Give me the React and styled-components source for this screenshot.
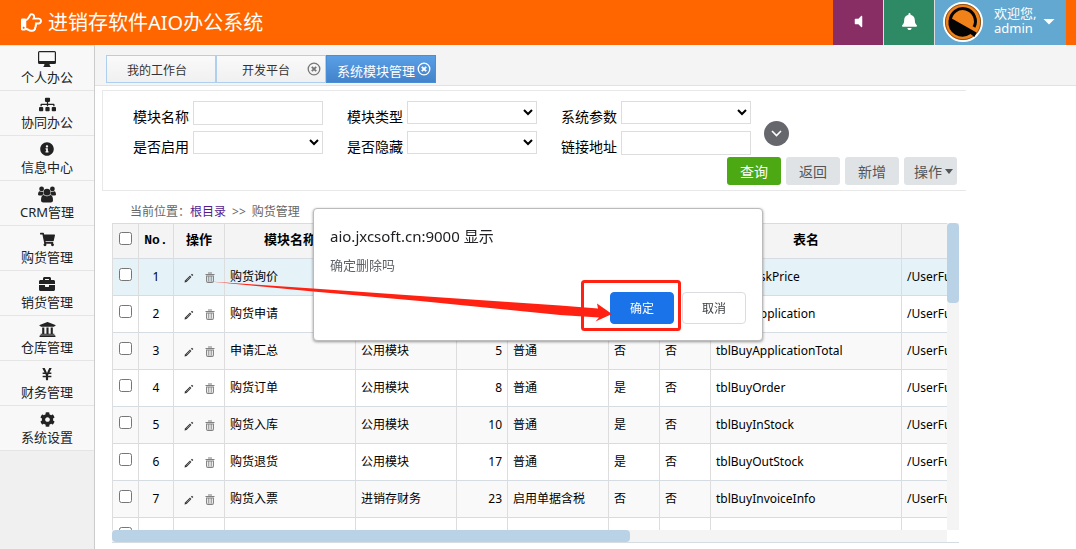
import React, { useState } from "react";
import styled, { createGlobalStyle } from "styled-components";
import {
  FaRegHandPointRight,
  FaSitemap,
  FaInfoCircle,
  FaShoppingCart,
  FaBriefcase,
  FaUniversity,
  FaYenSign,
  FaCog,
  FaVolumeOff,
  FaBell,
} from "react-icons/fa";

const GlobalStyle = createGlobalStyle`
  * {
    box-sizing: border-box;
  }

  body {
    margin: 0;
    background: #fff;
    color: #000;
    font-family: "Noto Sans", "Noto Sans CJK SC", sans-serif;
    font-size: 12px;
  }

  button, input, select {
    font-family: inherit;
  }
`;

const Page = styled.div`
  height: 100vh;
  display: flex;
  flex-direction: column;
  overflow: hidden;
`;

const Header = styled.header`
  flex: none;
  height: 45px;
  display: flex;
  justify-content: space-between;
  padding: 0 10px 0 21px;
  background: #ff6600;
  color: #fff;
`;

const Brand = styled.a`
  display: flex;
  align-items: center;
  gap: 6px;
  color: #fff;
  font-size: 20px;
  line-height: 44px;
  text-decoration: none;
`;

const HeaderTools = styled.div`
  display: flex;
`;

const ToolButton = styled.button`
  width: 51px;
  display: flex;
  align-items: center;
  justify-content: center;
  padding: 0 0 2px;
  border: 0;
  border-right: 1px solid #ddd;
  background: ${(props) => props.$color};
  color: #fff;
  font-size: 17px;
`;

const UserButton = styled.button`
  width: 131px;
  display: flex;
  align-items: center;
  padding: 0 11px 2px 8px;
  border: 0;
  background: #62a8d1;
  color: #fff;
  font-size: 13px;
  line-height: 15px;
  text-align: left;
`;

const UserName = styled.span`
  flex: 1;
  padding: 0 0 1px 11px;
`;

const Body = styled.div`
  flex: 1;
  min-height: 0;
  display: flex;
`;

const Sidebar = styled.nav`
  flex: none;
  width: 95px;
  border-top: 1px solid #e5e5e5;
  border-right: 1px solid #ccc;
  background: #f0f0f0;
`;

const SideItem = styled.a`
  height: 45px;
  display: flex;
  flex-direction: column;
  align-items: center;
  padding-top: 4px;
  border-bottom: 1px solid #e5e5e5;
  background: #f8f8f8;
  color: #222;
  font-size: 13px;
  line-height: 18px;
  text-decoration: none;
`;

const SideIcon = styled.span`
  height: 18px;
  display: flex;
  align-items: center;
`;

const Main = styled.main`
  flex: 1;
  min-width: 0;
  display: flex;
  flex-direction: column;
`;

const TabBar = styled.div`
  flex: none;
  height: 41px;
  display: flex;
  padding: 10px 11px 2px;
  border-bottom: 1px solid #e2e2e2;
  background: #f4f4f4;
`;

const Tab = styled.div`
  width: 110px;
  display: flex;
  align-items: center;
  padding: 0 ${(props) => (props.$closable ? "4px" : "16px")} 0 8px;
  border: 1px solid ${(props) => (props.$active ? "#4a8fd6" : "#aed0ee")};
  background: ${(props) =>
    props.$active
      ? "linear-gradient(#5a9fe6, #4283cb)"
      : "linear-gradient(#fafafa, #f0f0f0)"};
  color: ${(props) => (props.$active ? "#fff" : "#333")};
`;

const TabLabel = styled.button`
  flex: 1;
  padding: 4px 0 0;
  border: 0;
  background: none;
  color: inherit;
  font-size: ${(props) => (props.$active ? "13px" : "12px")};
  line-height: 18px;
  white-space: nowrap;
`;

const CloseButton = styled.button`
  height: 14px;
  padding: 0;
  border: 0;
  background: none;
  color: ${(props) => (props.$active ? "#fff" : "#777")};

  svg {
    display: block;
  }
`;

const Content = styled.div`
  flex: 1;
  min-height: 0;
  display: flex;
  flex-direction: column;
  padding: 4px 110px 6px 7px;
`;

const SearchPanel = styled.form`
  display: flex;
  flex-direction: column;
  padding: 10px 9px 5px 30px;
  border: 1px solid #e8e8e8;
  border-right: 0;
`;

const SearchTop = styled.div`
  display: flex;
  gap: 13px;
`;

const Fields = styled.div`
  display: grid;
  grid-template-columns: repeat(3, 190px);
  grid-auto-rows: 24px;
  gap: 6px 24px;
`;

const Field = styled.label`
  display: flex;
  justify-content: space-between;
  font-size: 14px;
  line-height: 18px;
`;

const FieldName = styled.span`
  padding-top: 7px;
`;

const TextInput = styled.input`
  width: 130px;
  height: 24px;
  border: 1px solid #ddd;
  background: #fff;
`;

const Select = styled.select`
  width: 130px;
  height: 23px;
  border: 1px solid #ddd;
  background: #fff;
`;

const MoreButton = styled.button`
  width: 25px;
  height: 25px;
  display: flex;
  align-items: center;
  justify-content: center;
  margin-top: 20px;
  padding: 0;
  border: 0;
  border-radius: 50%;
  background: #66676c;
  color: #fff;
`;

const Actions = styled.div`
  display: flex;
  justify-content: flex-end;
  gap: 5px;
  padding-top: 2px;
`;

const ActionButton = styled.button`
  height: 28px;
  display: flex;
  align-items: center;
  justify-content: center;
  gap: 3px;
  padding: 0 ${(props) => (props.$menu ? "4px 0 10px" : "13px")};
  border: 0;
  border-radius: 3px;
  background: ${(props) => (props.$primary ? "#4ca914" : "#e0e3e6")};
  color: ${(props) => (props.$primary ? "#fff" : "#555")};
  font-size: 14px;
  white-space: nowrap;
`;

const Breadcrumb = styled.div`
  display: flex;
  gap: 6px;
  padding: 12px 28px 2px;
  color: #666;
  line-height: 18px;

  a {
    margin-left: -6px;
    color: #551a8b;
    text-decoration: none;
  }
`;

const GridBox = styled.div`
  flex: 1;
  min-height: 0;
  display: grid;
  grid-template-columns: minmax(0, 1fr) 12px;
  grid-template-rows: minmax(0, 1fr) 12px;
  margin: 0 7px 0 10px;
  border-bottom: 1px solid #d5dce2;
`;

const TableView = styled.div`
  overflow: hidden;
`;

const Track = styled.div`
  background: #f4f4f4;
`;

const Thumb = styled.div`
  width: ${(props) => props.$width || "100%"};
  height: ${(props) => props.$height || "100%"};
  border-radius: 4px;
  background: #bad2e5;
`;

const Table = styled.table`
  width: 1012px;
  table-layout: fixed;
  border-collapse: separate;
  border-spacing: 0;
  border-top: 1px solid #d5dce2;
  border-left: 1px solid #ddd;
`;

const Th = styled.th`
  height: 35px;
  padding: 0;
  border-right: 1px solid #ddd;
  border-bottom: 1px solid #d5dce2;
  background: #f4f4f4;
  font-family: "Liberation Mono", "Noto Sans CJK SC", monospace;
  font-weight: 700;
  font-size: 13px;
  line-height: 18px;
`;

const Row = styled.tr`
  background: ${(props) =>
    props.$selected ? "#e5f2f8" : props.$odd ? "#f9f9f9" : "#fff"};
`;

const Td = styled.td`
  height: 37px;
  padding: 0 5px;
  border-right: 1px solid #ddd;
  border-bottom: 1px solid #d5dce2;
  line-height: 18px;
  text-align: ${(props) => props.$align || "left"};
  white-space: nowrap;
`;

const CheckTd = styled(Td)`
  padding: 0;
`;

const Check = styled.input`
  display: block;
  width: 13px;
  height: 13px;
  margin: 0 auto 5px;
`;

const RowTools = styled.div`
  display: flex;
  justify-content: center;
  gap: 11px;
  padding-top: 1px;
`;

const IconButton = styled.button`
  padding: 0;
  border: 0;
  background: none;

  svg {
    display: block;
  }
`;

const Dialog = styled.div`
  position: fixed;
  top: 208px;
  left: 50%;
  width: 450px;
  margin-left: -225px;
  padding: 16px;
  border: 1px solid #bbb;
  border-radius: 4px;
  background: #fff;
  box-shadow: 0 1px 3px rgba(0, 0, 0, 0.4);
`;

const DialogTitle = styled.h1`
  margin: 0;
  color: #202124;
  font-size: 15px;
  font-weight: 400;
  line-height: 22px;
`;

const DialogText = styled.p`
  margin: 8px 0 17px;
  color: #5f6368;
  font-size: 13px;
  line-height: 20px;
`;

const DialogButtons = styled.div`
  display: flex;
  justify-content: flex-end;
  gap: 8px;
`;

const DialogButton = styled.button`
  width: 64px;
  height: 32px;
  padding: 0;
  border: 1px solid ${(props) => (props.$primary ? "#1a73e8" : "#dadce0")};
  border-radius: 4px;
  background: ${(props) => (props.$primary ? "#1a73e8" : "#fff")};
  color: ${(props) => (props.$primary ? "#fff" : "#3c4043")};
  font-size: 12px;
`;

const Marker = styled.svg`
  position: absolute;
  top: -1px;
  left: -1px;
  overflow: visible;
  pointer-events: none;
`;

function DesktopIcon() {
  return (
    <svg width="18" height="16" viewBox="0 0 18 16" fill="#222">
      <path
        fillRule="evenodd"
        d="M1.5 0 H16.5 Q18 0 18 1.5 V11.5 Q18 13 16.5 13 H11.5 L12 15 H12.5 V16 H5.5 V15 H6 L6.5 13 H1.5 Q0 13 0 11.5 V1.5 Q0 0 1.5 0 Z M1.2 1.2 V10 H16.8 V1.2 Z"
      />
    </svg>
  );
}

function GroupIcon() {
  return (
    <svg width="18" height="17" viewBox="0 0 18 17" fill="#222">
      <circle cx="3.6" cy="2.9" r="2.4" />
      <circle cx="14.4" cy="2.9" r="2.4" />
      <path d="M0 9 Q0 5 2 5.2 Q3.6 6.3 5.2 5.4 Q5 7 5.8 8.3 Q4.5 8.5 3.8 9.4 H1.5 Q0 9.4 0 8.4 Z" />
      <path d="M18 9 Q18 5 16 5.2 Q14.4 6.3 12.8 5.4 Q13 7 12.2 8.3 Q13.5 8.5 14.2 9.4 H16.5 Q18 9.4 18 8.4 Z" />
      <circle cx="9" cy="6.2" r="3.4" />
      <path d="M3 14.5 Q3 9 5.7 9 Q9 11.4 12.3 9 Q15 9 15 14.5 Q15 16.6 12.8 16.6 H5.2 Q3 16.6 3 14.5 Z" />
    </svg>
  );
}

const menu = [
  { name: "个人办公", icon: DesktopIcon },
  { name: "协同办公", icon: FaSitemap, size: 17 },
  { name: "信息中心", icon: FaInfoCircle, size: 14 },
  { name: "CRM管理", icon: GroupIcon },
  { name: "购货管理", icon: FaShoppingCart, size: 15 },
  { name: "销货管理", icon: FaBriefcase, size: 16 },
  { name: "仓库管理", icon: FaUniversity, size: 17 },
  { name: "财务管理", icon: FaYenSign, size: 14 },
  { name: "系统设置", icon: FaCog, size: 15 },
];

const tabs = [
  { name: "我的工作台" },
  { name: "开发平台", closable: true },
  { name: "系统模块管理", closable: true },
];

const fields = [
  { name: "模块名称" },
  { name: "模块类型", select: true },
  { name: "系统参数", select: true },
  { name: "是否启用", select: true },
  { name: "是否隐藏", select: true },
  { name: "链接地址" },
];

const columnWidths = [26, 35, 51, 131, 101, 51, 101, 51, 51, 191, 222];

const headings = ["No.", "操作", "模块名称", "系统", "排序", "类型", "启用", "隐藏", "表名", ""];

const rows = [
  ["购货询价", "公用模块", 1, "普通", "是", "否", "tblBuyAskPrice"],
  ["购货申请", "公用模块", 3, "普通", "是", "否", "tblBuyApplication"],
  ["申请汇总", "公用模块", 5, "普通", "否", "否", "tblBuyApplicationTotal"],
  ["购货订单", "公用模块", 8, "普通", "是", "否", "tblBuyOrder"],
  ["购货入库", "公用模块", 10, "普通", "是", "否", "tblBuyInStock"],
  ["购货退货", "公用模块", 17, "普通", "是", "否", "tblBuyOutStock"],
  ["购货入票", "进销存财务", 23, "启用单据含税", "否", "否", "tblBuyInvoiceInfo"],
];

function Avatar() {
  return (
    <svg width="40" height="40" viewBox="0 0 40 40">
      <circle cx="20" cy="20" r="19" fill="#f08219" stroke="#fff" strokeWidth="2" />
      <circle cx="20" cy="20" r="17.6" fill="none" stroke="#8b5423" strokeWidth="1" />
      <path
        d="M7 15.5 L33.5 30.5 L31.5 35 L27.5 32 A14 14 0 0 1 5.5 19 Z"
        fill="#050505"
      />
      <path d="M7.2 19 A12.6 12.6 0 1 1 31 25" fill="none" stroke="#050505" strokeWidth="3" />
    </svg>
  );
}

function CloseIcon() {
  return (
    <svg width="14" height="14" viewBox="0 0 14 14" fill="none" stroke="currentColor">
      <circle cx="7" cy="7" r="5.8" strokeWidth="1.3" />
      <path d="M4.8 4.8 L9.2 9.2 M9.2 4.8 L4.8 9.2" strokeWidth="1.9" />
    </svg>
  );
}

function PencilIcon() {
  return (
    <svg width="10" height="10" viewBox="0 0 10 10" fill="#333">
      <path d="M0.5 9.5 L1 7.4 L6 2.6 L7.4 4 L2.6 9 Z" />
      <path d="M6.9 1.7 L8 0.7 L9.3 2 L8.3 3.1 Z" />
      <path d="M2.4 7.6 L6.2 3.9" stroke="#aaa" strokeWidth="0.7" />
    </svg>
  );
}

function TrashIcon() {
  return (
    <svg width="10" height="11" viewBox="0 0 10 11" fill="none" stroke="#808080">
      <path d="M0.5 2.5 H9.5 M3 1 H7" strokeWidth="1.2" />
      <path d="M1.6 4 V9 Q1.6 10.4 3 10.4 H7 Q8.4 10.4 8.4 9 V4 Z" strokeWidth="1.1" />
      <path d="M3.8 4 V9.5 M6.2 4 V9.5" />
    </svg>
  );
}

function SearchForm() {
  return (
    <SearchPanel onSubmit={(e) => e.preventDefault()}>
      <SearchTop>
        <Fields>
          {fields.map((field) => (
            <Field key={field.name}>
              <FieldName>{field.name}</FieldName>
              {field.select ? (
                <Select>
                  <option></option>
                </Select>
              ) : (
                <TextInput type="text" />
              )}
            </Field>
          ))}
        </Fields>
        <MoreButton type="button" aria-label="更多">
          <svg width="11" height="7" viewBox="0 0 11 7" fill="none" stroke="#fff" strokeWidth="1.6">
            <path d="M1 1 L5.5 5.5 L10 1" />
          </svg>
        </MoreButton>
      </SearchTop>
      <Actions>
        <ActionButton type="submit" $primary>查询</ActionButton>
        <ActionButton type="button">返回</ActionButton>
        <ActionButton type="button">新增</ActionButton>
        <ActionButton type="button" $menu>
          操作
          <svg width="8" height="5" viewBox="0 0 8 5" fill="#555">
            <path d="M0 0 H8 L4 5 Z" />
          </svg>
        </ActionButton>
      </Actions>
    </SearchPanel>
  );
}

function ModuleTable() {
  return (
    <GridBox>
      <TableView>
        <Table>
          <colgroup>
            {columnWidths.map((width, i) => (
              <col key={i} width={width} />
            ))}
          </colgroup>
          <thead>
            <tr>
              <Th>
                <Check type="checkbox" aria-label="全选" />
              </Th>
              {headings.map((heading) => (
                <Th key={heading}>{heading}</Th>
              ))}
            </tr>
          </thead>
          <tbody>
            {rows.map(([name, system, order, type, enabled, hidden, table], i) => (
              <Row key={name} $selected={i === 0} $odd={i % 2 === 0}>
                <CheckTd>
                  <Check type="checkbox" aria-label={name} />
                </CheckTd>
                <Td $align="center">{i + 1}</Td>
                <Td>
                  <RowTools>
                    <IconButton aria-label="修改">
                      <PencilIcon />
                    </IconButton>
                    <IconButton aria-label="删除">
                      <TrashIcon />
                    </IconButton>
                  </RowTools>
                </Td>
                <Td>{name}</Td>
                <Td>{system}</Td>
                <Td $align="right">{order}</Td>
                <Td>{type}</Td>
                <Td>{enabled}</Td>
                <Td>{hidden}</Td>
                <Td>{table}</Td>
                <Td>/UserFunction</Td>
              </Row>
            ))}
            <Row>
              <CheckTd>
                <Check type="checkbox" aria-label="选择" />
              </CheckTd>
              {headings.map((heading) => (
                <Td key={heading} />
              ))}
            </Row>
          </tbody>
        </Table>
      </TableView>
      <Track>
        <Thumb $height="26%" />
      </Track>
      <Track>
        <Thumb $width="62%" />
      </Track>
    </GridBox>
  );
}

function ConfirmDialog({ onClose }) {
  return (
    <Dialog role="dialog" aria-labelledby="confirm-title">
      <DialogTitle id="confirm-title">aio.jxcsoft.cn:9000 显示</DialogTitle>
      <DialogText>确定删除吗</DialogText>
      <DialogButtons>
        <DialogButton $primary onClick={onClose}>确定</DialogButton>
        <DialogButton onClick={onClose}>取消</DialogButton>
      </DialogButtons>
      {/* red arrow from the delete icon to the confirm button */}
      <Marker width="450" height="133" viewBox="0 0 450 133">
        <rect x="269.5" y="73.5" width="97" height="48" rx="2" fill="none" stroke="#ff2213" strokeWidth="3" />
        <path
          d="M-103 73.5 L0 80.5 L107 88 L247 97.5 L285 100.5 L284 95.5 L299 106 L282.5 113.5 L286 109.5 L247 107 L107 93 L0 83.5 Z"
          fill="#ff2213"
        />
      </Marker>
    </Dialog>
  );
}

function App() {
  const [active, setActive] = useState("系统模块管理");
  const [confirming, setConfirming] = useState(true);

  return (
    <Page>
      <GlobalStyle />
      <Header>
        <Brand href="#">
          <FaRegHandPointRight size={21} />
          进销存软件AIO办公系统
        </Brand>
        <HeaderTools>
          <ToolButton $color="#892e65" aria-label="声音">
            <FaVolumeOff size={15} />
          </ToolButton>
          <ToolButton $color="#2e8965" aria-label="消息">
            <FaBell />
          </ToolButton>
          <UserButton>
            <Avatar />
            <UserName>
              欢迎您,
              <br />
              admin
            </UserName>
            <svg width="12" height="6" viewBox="0 0 12 6" fill="#fff">
              <path d="M0.5 0 H11.5 L6 5.5 Z" />
            </svg>
          </UserButton>
        </HeaderTools>
      </Header>
      <Body>
        <Sidebar>
          {menu.map(({ name, icon: Icon, size }) => (
            <SideItem key={name} href="#">
              <SideIcon>
                <Icon size={size} />
              </SideIcon>
              {name}
            </SideItem>
          ))}
        </Sidebar>
        <Main>
          <TabBar>
            {tabs.map((tab) => (
              <Tab key={tab.name} $active={tab.name === active} $closable={tab.closable}>
                <TabLabel $active={tab.name === active} onClick={() => setActive(tab.name)}>
                  {tab.name}
                </TabLabel>
                {tab.closable && (
                  <CloseButton $active={tab.name === active} aria-label="关闭">
                    <CloseIcon />
                  </CloseButton>
                )}
              </Tab>
            ))}
          </TabBar>
          <Content>
            <SearchForm />
            <Breadcrumb>
              <span>当前位置：</span>
              <a href="#">根目录</a>
              <span>&gt;&gt;</span>
              <span>购货管理</span>
            </Breadcrumb>
            <ModuleTable />
          </Content>
        </Main>
      </Body>
      {confirming && <ConfirmDialog onClose={() => setConfirming(false)} />}
    </Page>
  );
}

export default App;
